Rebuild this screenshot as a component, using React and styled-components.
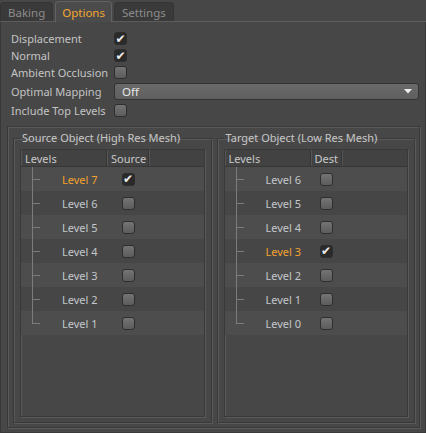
import React from 'react';
import styled, { createGlobalStyle } from 'styled-components';

const GlobalStyle = createGlobalStyle`
  html, body {
    margin: 0;
    padding: 0;
    background: #474747;
  }
`;

const Panel = styled.div`
  width: 426px;
  height: 433px;
  background: #474747;
  font-family: 'Noto Sans', 'DejaVu Sans', sans-serif;
  font-size: 11px;
  color: #c6c6c6;
  display: flex;
  flex-direction: column;
  box-sizing: border-box;
  overflow: hidden;
`;

const TabBar = styled.div`
  display: flex;
  align-items: flex-end;
  gap: 2px;
  height: 22px;
  border-bottom: 1px solid #5c5c5c;
  box-sizing: border-box;
`;

const Tab = styled.div`
  height: ${(p) => (p.$active ? '21px' : '19px')};
  padding: 0 ${(p) => (p.$active ? '6px' : '7px')};
  box-sizing: border-box;
  display: flex;
  align-items: center;
  font-size: 11.5px;
  border-radius: 4px 4px 0 0;
  background: ${(p) => (p.$active ? '#4b4b4b' : '#3a3a3a')};
  color: ${(p) => (p.$active ? '#f4a631' : '#8c8c8c')};
  border: 1px solid ${(p) => (p.$active ? '#626262' : '#343434')};
  border-bottom: none;
  margin-bottom: ${(p) => (p.$active ? '-1px' : '0')};
`;

const Body = styled.div`
  flex: 1;
  display: flex;
  flex-direction: column;
  border-left: 1px solid #383838;
  border-right: 1px solid #383838;
  border-bottom: 1px solid #3a3a3a;
  padding: 8px 5px 4px 6px;
  box-sizing: border-box;
`;

const Form = styled.div`
  display: grid;
  grid-template-columns: 103px 1fr;
  grid-template-rows: 17px 17px 17px 21px 17px;
  align-items: center;
  padding-left: 4px;
  padding-right: 1px;
  margin-bottom: 7px;
`;

const Label = styled.div`
  font-size: 11px;
  color: #c4c4c4;
  white-space: nowrap;
`;

const Check = styled.div`
  width: 13px;
  height: 13px;
  box-sizing: border-box;
  border-radius: 3px;
  border: 1px solid #2e2e2e;
  background: ${(p) =>
    p.$on ? '#2a2a2a' : 'linear-gradient(#747474, #5c5c5c)'};
  color: #ececec;
  display: flex;
  align-items: center;
  justify-content: center;
  font-size: 12px;
  line-height: 1;
  font-style: italic;
  font-family: 'DejaVu Sans', sans-serif;
`;

const Select = styled.div`
  height: 17px;
  box-sizing: border-box;
  border: 1px solid #333;
  border-radius: 3px;
  background: linear-gradient(#6a6a6a, #5f5f5f);
  color: #e6e6e6;
  font-size: 11.5px;
  display: flex;
  align-items: center;
  justify-content: space-between;
  padding: 0 6px 0 7px;
`;

const Frame = styled.div`
  flex: 1;
  display: flex;
  gap: 5px;
  padding: 4px 4px 4px 5px;
  border: 1px solid #393939;
  box-shadow: inset 1px 1px 0 #5a5a5a, 1px 1px 0 #5a5a5a;
`;

const Group = styled.fieldset`
  flex: 1;
  margin: 0;
  padding: 4px 6px 5px 6px;
  min-width: 0;
  display: flex;
  flex-direction: column;
  border: 1px solid #393939;
  box-shadow: inset 1px 1px 0 #5a5a5a, 1px 1px 0 #5a5a5a;
`;

const Legend = styled.legend`
  padding: 0 2px;
  margin-left: 0;
  font-size: 11px;
  color: #c8c8c8;
  line-height: 14px;
`;

const Table = styled.div`
  flex: 1;
  display: flex;
  flex-direction: column;
  border: 1px solid #393939;
  box-shadow: inset 1px 1px 0 #5a5a5a, 1px 1px 0 #5a5a5a;
  background: #474747;
`;

const Header = styled.div`
  display: grid;
  grid-template-columns: ${(p) => p.$cols};
  height: 16px;
  background: #424242;
  border-bottom: 1px solid #363636;
`;

const HeadCell = styled.div`
  display: flex;
  align-items: center;
  padding-left: 4px;
  font-size: 11px;
  color: #c8c8c8;
  border-right: 1px solid #363636;
  box-shadow: inset 1px 0 0 #555;
  &:last-child {
    border-right: none;
  }
`;

const Row = styled.div`
  display: grid;
  grid-template-columns: ${(p) => p.$cols};
  height: 24px;
  align-items: center;
  background: ${(p) => (p.$odd ? '#4d4d4d' : '#464646')};
`;

const LevelCell = styled.div`
  position: relative;
  height: 100%;
  display: flex;
  align-items: center;
  padding-left: 41px;
  color: ${(p) => (p.$active ? '#f2a12e' : '#c3c7cb')};

  &::before {
    content: '';
    position: absolute;
    left: 11px;
    top: 0;
    height: ${(p) => (p.$last ? '50%' : '100%')};
    border-left: 1px solid #7c7c7c;
  }
  &::after {
    content: '';
    position: absolute;
    left: 11px;
    top: 50%;
    width: 8px;
    border-top: 1px solid #7c7c7c;
  }
`;

const CheckCell = styled.div`
  display: flex;
  justify-content: center;
`;

const Arrow = () => (
  <svg width="8" height="5" viewBox="0 0 8 5">
    <path d="M0 0 L8 0 L4 4.5 Z" fill="#f0f0f0" />
  </svg>
);

const LevelTable = ({ title, column, colWidth, levels, checked }) => {
  const cols = `86px ${colWidth}px 1fr`;
  return (
    <Group>
      <Legend>{title}</Legend>
      <Table>
        <Header $cols={cols}>
          <HeadCell>Levels</HeadCell>
          <HeadCell>{column}</HeadCell>
          <HeadCell />
        </Header>
        {levels.map((lv, i) => (
          <Row key={lv} $cols={cols} $odd={i % 2 === 0}>
            <LevelCell $active={lv === checked} $last={i === levels.length - 1}>
              Level {lv}
            </LevelCell>
            <CheckCell>
              <Check $on={lv === checked}>{lv === checked ? '✔' : ''}</Check>
            </CheckCell>
            <div />
          </Row>
        ))}
      </Table>
    </Group>
  );
};

const App = () => (
  <>
    <GlobalStyle />
    <Panel>
      <TabBar>
        <Tab>Baking</Tab>
        <Tab $active>Options</Tab>
        <Tab>Settings</Tab>
      </TabBar>
      <Body>
        <Form>
          <Label>Displacement</Label>
          <Check $on>✔</Check>
          <Label>Normal</Label>
          <Check $on>✔</Check>
          <Label>Ambient Occlusion</Label>
          <Check />
          <Label>Optimal Mapping</Label>
          <Select>
            Off
            <Arrow />
          </Select>
          <Label>Include Top Levels</Label>
          <Check />
        </Form>
        <Frame>
          <LevelTable
            title="Source Object (High Res Mesh)"
            column="Source"
            colWidth={42}
            levels={[7, 6, 5, 4, 3, 2, 1]}
            checked={7}
          />
          <LevelTable
            title="Target Object (Low Res Mesh)"
            column="Dest"
            colWidth={31}
            levels={[6, 5, 4, 3, 2, 1, 0]}
            checked={3}
          />
        </Frame>
      </Body>
    </Panel>
  </>
);

export default App;
